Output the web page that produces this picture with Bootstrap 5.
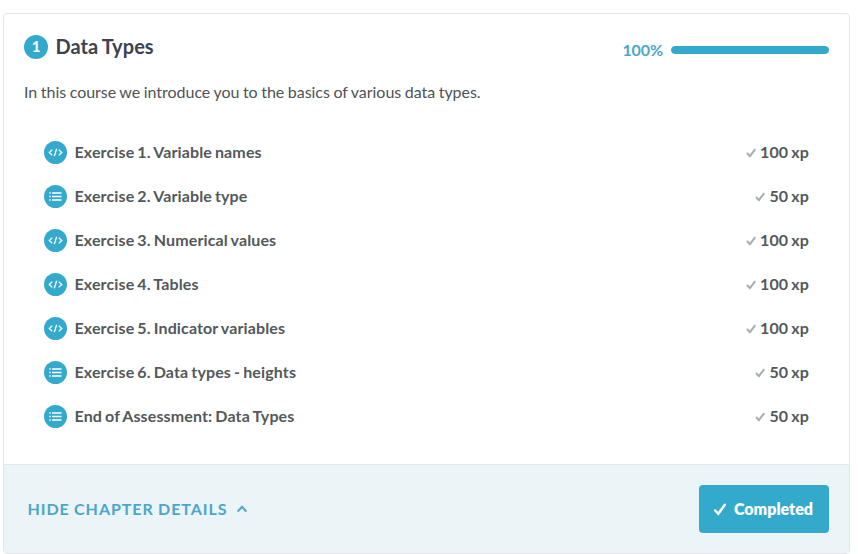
<!DOCTYPE html>
<html lang="en">
<head>
<meta charset="utf-8">
<meta name="viewport" content="width=device-width, initial-scale=1">
<title>Data Types</title>
<link href="https://cdn.jsdelivr.net/npm/bootstrap@5.3.0/dist/css/bootstrap.min.css" rel="stylesheet">
<style>
:root { --accent: #33aacc; }
body { font-family: Lato, sans-serif; font-size: 16px; color: #4d5356; background: #fff; overflow: hidden; }
.chapter { margin: 13px 8px 0 3px; height: 541px; border: 1px solid #e3e6e8; border-radius: 4px; }
.chapter-body { padding: 20px; }
.chapter-head { height: 25px; }
.chapter-number { width: 24px; height: 24px; background: var(--accent); font-size: 15px; line-height: 1; }
.chapter-title { font-size: 20px; line-height: 25px; font-weight: 700; letter-spacing: .05px; word-spacing: -.8px; margin-left: -.5px; color: #3d4251; }
.percent { color: #4ba6c9; font-weight: 700; letter-spacing: -.1px; line-height: 24px; }
.meter { width: 158px; height: 8px; border-radius: 4px; background: #e6eaeb; }
.meter .progress-bar { background: var(--accent); border-radius: 4px; }
.chapter-progress { margin-top: 6px; }
.intro { margin-top: 20px; line-height: 26px; letter-spacing: -.03px; word-spacing: -.5px; }
.exercises { margin: 25px 20px 0; }
.exercise { height: 44px; font-weight: 700; letter-spacing: .13px; word-spacing: -1px; color: #53585b; }
.exercise-icon { width: 23px; height: 23px; margin-right: 7.5px; }
.check { margin: 2px 4px 0 0; }
.chapter-foot { height: 89px; padding: 0 20px 0 23.5px; background: #ebf4f7; border-top: 1px solid #dfe9eb; border-radius: 0 0 3px 3px; }
.toggle-details { color: #4ba6c9; font-weight: 700; letter-spacing: .95px; word-spacing: -.5px; line-height: 24px; }
.btn-done { width: 130px; height: 48px; background: var(--accent); color: #fff; font-weight: 800; letter-spacing: 0; border-radius: 4px; border: 0; padding: 0 1px 0 0; }
.btn-done:hover { background: #2b9bbb; color: #fff; }
</style>
<script src="https://cdn.jsdelivr.net/npm/bootstrap@5.3.0/dist/js/bootstrap.bundle.min.js"></script>
</head>
<body>
<svg class="d-none" xmlns="http://www.w3.org/2000/svg">
  <symbol id="code" viewBox="0 0 23 23">
    <circle cx="11.5" cy="11.5" r="11.5" fill="#33aacc"/>
    <path d="M8.3 8.6 5.3 11.5l3 2.9M14.7 8.6l3 2.9-3 2.9M12.7 7.8l-2.4 7.4" fill="none" stroke="#fff" stroke-width="1.3"/>
  </symbol>
  <symbol id="list" viewBox="0 0 23 23">
    <circle cx="11.5" cy="11.5" r="11.5" fill="#33aacc"/>
    <path d="M5.3 8h1.4M5.3 11.5h1.4M5.3 15h1.4M8 8h9.5M8 11.5h9.5M8 15h9.5" fill="none" stroke="#fff" stroke-width="1.3"/>
  </symbol>
  <symbol id="tick" viewBox="0 0 10 10">
    <path d="M1 5 3.9 8.2 9.2 1.2" fill="none" stroke="#a8adb1" stroke-width="2"/>
  </symbol>
</svg>
<main class="chapter d-flex flex-column">
  <section class="chapter-body flex-grow-1">
    <header class="chapter-head d-flex justify-content-between">
      <div class="d-flex align-items-center">
        <span class="chapter-number rounded-circle text-white fw-bold d-flex align-items-center justify-content-center me-2">1</span>
        <h4 class="chapter-title mb-0">Data Types</h4>
      </div>
      <div class="chapter-progress d-flex align-items-center">
        <span class="percent me-2">100%</span>
        <div class="progress meter" role="progressbar" aria-valuenow="100" aria-valuemin="0" aria-valuemax="100"><div class="progress-bar w-100"></div></div>
      </div>
    </header>
    <p class="intro mb-0">In this course we introduce you to the basics of various data types.</p>
    <ul class="exercises list-unstyled mb-0">
      <li class="exercise d-flex align-items-center"><svg class="exercise-icon"><use href="#code"/></svg><span>Exercise 1. Variable names</span><svg class="check ms-auto" width="10" height="10"><use href="#tick"/></svg><span>100 xp</span></li>
      <li class="exercise d-flex align-items-center"><svg class="exercise-icon"><use href="#list"/></svg><span>Exercise 2. Variable type</span><svg class="check ms-auto" width="10" height="10"><use href="#tick"/></svg><span>50 xp</span></li>
      <li class="exercise d-flex align-items-center"><svg class="exercise-icon"><use href="#code"/></svg><span>Exercise 3. Numerical values</span><svg class="check ms-auto" width="10" height="10"><use href="#tick"/></svg><span>100 xp</span></li>
      <li class="exercise d-flex align-items-center"><svg class="exercise-icon"><use href="#code"/></svg><span>Exercise 4. Tables</span><svg class="check ms-auto" width="10" height="10"><use href="#tick"/></svg><span>100 xp</span></li>
      <li class="exercise d-flex align-items-center"><svg class="exercise-icon"><use href="#code"/></svg><span>Exercise 5. Indicator variables</span><svg class="check ms-auto" width="10" height="10"><use href="#tick"/></svg><span>100 xp</span></li>
      <li class="exercise d-flex align-items-center"><svg class="exercise-icon"><use href="#list"/></svg><span>Exercise 6. Data types - heights</span><svg class="check ms-auto" width="10" height="10"><use href="#tick"/></svg><span>50 xp</span></li>
      <li class="exercise d-flex align-items-center"><svg class="exercise-icon"><use href="#list"/></svg><span>End of Assessment: Data Types</span><svg class="check ms-auto" width="10" height="10"><use href="#tick"/></svg><span>50 xp</span></li>
    </ul>
  </section>
  <footer class="chapter-foot d-flex align-items-center justify-content-between">
    <a class="toggle-details text-decoration-none d-flex align-items-center" href="#">HIDE CHAPTER DETAILS
      <svg class="ms-2" width="12" height="10" viewBox="0 0 12 10"><path d="M1.6 7.6 6 2.8l4.4 4.8" fill="none" stroke="#4ba6c9" stroke-width="2"/></svg></a>
    <button class="btn btn-done d-flex align-items-center justify-content-center" type="button">
      <svg class="me-2" width="12" height="13" viewBox="0 0 12 13"><path d="M1.2 7.5 4.3 10.8 10.8 1.8" fill="none" stroke="#fff" stroke-width="2.5" stroke-linecap="round"/></svg>Completed</button>
  </footer>
</main>
</body>
</html>
